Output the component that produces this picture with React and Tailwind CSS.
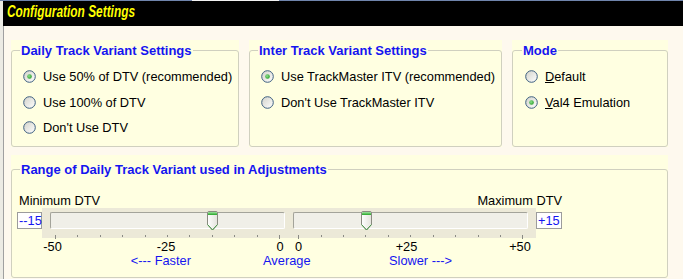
import React, { useId } from 'react';

function RadioIcon({ checked }) {
  const id = useId();
  return (
    <svg width="13" height="13" viewBox="0 0 13 13" className="shrink-0">
      <defs>
        <linearGradient id={`${id}f`} x1="0" y1="0" x2="1" y2="1">
          <stop offset="0" stopColor="#d2d2ca" />
          <stop offset="1" stopColor="#ffffff" />
        </linearGradient>
        <radialGradient id={`${id}d`} cx="0.4" cy="0.4" r="0.7">
          <stop offset="0" stopColor="#8fe08f" />
          <stop offset="1" stopColor="#1e9a1e" />
        </radialGradient>
      </defs>
      <circle cx="6.5" cy="6.5" r="5.8" fill={`url(#${id}f)`} stroke="#3d5f80" strokeWidth="1" />
      {checked && <circle cx="6.5" cy="6.5" r="2.3" fill={`url(#${id}d)`} />}
    </svg>
  );
}

function Option({ checked, children }) {
  return (
    <div className="h-[25.5px] flex items-center gap-[7px]">
      <RadioIcon checked={checked} />
      <span className="leading-[15px] whitespace-nowrap">{children}</span>
    </div>
  );
}

function Group({ title, width, pad, children }) {
  return (
    <div className={`bg-[#ffffe1] pt-[2.5px] flex flex-col ${width}`}>
      <fieldset className={`flex-1 border border-[#d0d0bf] rounded-[3px] min-w-0 ${pad}`}>
        <legend className="px-[1px] text-[13px] leading-[15px] font-bold text-[#1515f0]">{title}</legend>
        <div className="pt-[6.5px] ml-[3px] flex flex-col">{children}</div>
      </fieldset>
    </div>
  );
}

function Thumb() {
  const id = useId();
  return (
    <svg width="11" height="20" viewBox="0 0 11 20">
      <defs>
        <linearGradient id={`${id}b`} x1="0" y1="0" x2="1" y2="0">
          <stop offset="0" stopColor="#ffffff" />
          <stop offset="1" stopColor="#e4e3dc" />
        </linearGradient>
        <linearGradient id={`${id}g`} x1="0" y1="0" x2="0" y2="1">
          <stop offset="0" stopColor="#9fe29f" />
          <stop offset="1" stopColor="#26a626" />
        </linearGradient>
      </defs>
      <path d="M0.5 2 Q0.5 0.5 2 0.5 H9 Q10.5 0.5 10.5 2 V13.5 L5.5 19 L0.5 13.5 Z" fill={`url(#${id}b)`} stroke="#8a8a80" />
      <path d="M1 1.5 Q1 1 2 1 H9 Q10 1 10 1.5 V4 H1 Z" fill={`url(#${id}g)`} />
      <path d="M0.5 13.5 L5.5 19 L10.5 13.5" fill="none" stroke="#4a9a4a" />
    </svg>
  );
}

function Trackbar({ inset, channelClass, fraction }) {
  const ticks = Array.from({ length: 11 }, (_, i) => inset + 5 + i * 22.4);
  const thumbLeft = inset + 5 + fraction * 224 - 5;
  return (
    <div className="relative w-[247px] h-[30px] bg-[#ece9d8] shrink-0">
      <div className={`mt-[4px] h-[17px] w-[235px] rounded-[2px] bg-[#f0efe8] border border-t-[#a3a39a] border-l-[#a3a39a] border-b-white border-r-white ${channelClass}`} />
      <svg width="247" height="5" className="mt-[6px] block">
        {ticks.map((x, i) => (
          <rect key={i} x={Math.round(x)} y="0" width="1" height={i === 0 || i === 10 ? 4 : 2} fill="#8a8a84" />
        ))}
      </svg>
      <div className="absolute top-[3px]" style={{ left: thumbLeft }}>
        <Thumb />
      </div>
    </div>
  );
}

export default function App() {
  return (
    <div className="w-[683px] h-[279px] overflow-hidden bg-[#fef9ee] flex flex-col font-['Liberation_Sans',Arial,sans-serif] text-[12.8px] text-black">
      <div className="h-px flex shrink-0">
        <div className="w-[192px] bg-[#6f84ab]" />
        <div className="w-[87px] bg-[#f2f2f2]" />
        <div className="flex-1 bg-[#6f84ab]" />
      </div>
      <div className="flex flex-1 min-h-0">
        <div className="w-[3px] bg-[#ecebe4]" />
        <div className="flex-1 flex flex-col">
          <div className="h-[25px] bg-black pl-[4px] shrink-0">
            <span className="inline-block origin-left scale-x-[0.72] text-[16.5px] leading-[20px] font-bold italic text-[#ffff00] whitespace-nowrap">
              Configuration Settings
            </span>
          </div>
          <div className="flex-1 border-l border-[#a0a0a0] pl-[7px] pt-[14px]">
            <div className="flex gap-[10px] h-[107px]">
              <Group title="Daily Track Variant Settings" width="w-[228px]" pad="pl-[8px]">
                <Option checked>Use 50% of DTV (recommended)</Option>
                <Option>Use 100% of DTV</Option>
                <Option>Don't Use DTV</Option>
              </Group>
              <Group title="Inter Track Variant Settings" width="w-[253px]" pad="pl-[8px]">
                <Option checked>Use TrackMaster ITV (recommended)</Option>
                <Option>Don't Use TrackMaster ITV</Option>
              </Group>
              <Group title="Mode" width="w-[156px]" pad="pl-[9px]">
                <Option>
                  <span className="underline">D</span>efault
                </Option>
                <Option checked>
                  <span className="underline">V</span>al4 Emulation
                </Option>
              </Group>
            </div>

            <div className="mt-[8px] h-[123px] w-[657px] bg-[#ffffe1] pt-[6.5px] flex flex-col">
              <fieldset className="flex-1 border border-[#d0d0bf] rounded-[3px] pl-[5px] min-w-0">
                <legend className="ml-[3px] px-[1px] text-[13px] leading-[15px] font-bold text-[#1515f0]">
                  Range of Daily Track Variant used in Adjustments
                </legend>
                <div className="pt-[16px] w-[545px] flex justify-between leading-[15px]">
                  <span className="pl-[2px]">Minimum DTV</span>
                  <span>Maximum DTV</span>
                </div>
                <div className="flex items-start">
                  <div className="mt-[4px] w-[25px] h-[17px] bg-white border border-[#9c9c9c] pl-[1px] leading-[15px] text-[#1515f0] whitespace-nowrap">--15</div>
                  <Trackbar inset={8} channelClass="ml-[8px]" fraction={0.7} />
                  <Trackbar inset={4.3} channelClass="ml-[4px]" fraction={0.3} />
                  <div className="mt-[4px] w-[26px] h-[17px] bg-white border border-[#9c9c9c] pl-[1px] leading-[15px] text-[#1515f0] whitespace-nowrap">+15</div>
                </div>
                <div className="mt-[2px] flex leading-[14px]">
                  <span className="ml-[20.5px] w-[30px] text-center">-50</span>
                  <span className="ml-[83.5px] w-[30px] text-center">-25</span>
                  <span className="ml-[94px] w-[10px] text-center">0</span>
                  <span className="ml-[8.5px] w-[10px] text-center">0</span>
                  <span className="ml-[88px] w-[30px] text-center">+25</span>
                  <span className="ml-[83.5px] w-[30px] text-center">+50</span>
                </div>
                <div className="flex leading-[14px] text-[#1515f0] whitespace-nowrap">
                  <span className="ml-[103.9px] w-[80px] text-center">&lt;--- Faster</span>
                  <span className="ml-[55.9px] w-[60px] text-center">Average</span>
                  <span className="ml-[63.7px] w-[80px] text-center">Slower ---&gt;</span>
                </div>
              </fieldset>
            </div>
          </div>
        </div>
      </div>
    </div>
  );
}
